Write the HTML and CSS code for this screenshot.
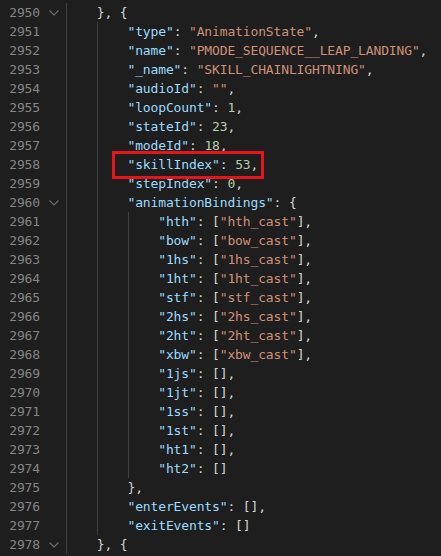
FILE: index.html
```html
<!DOCTYPE html>
<html>
<head>
<meta charset="utf-8">
<link rel="stylesheet" href="styles.css">
</head>
<body>
<div class="editor">
  <div class="row"><span class="num">2950</span><span class="fold"><svg width="10" height="6" viewBox="0 0 10 6"><polyline points="0.5,0.5 5,5 9.5,0.5" fill="none" stroke="#6f6f6f" stroke-width="1.1"/></svg></span><span class="code"><span class="ig">    </span>}, {</span></div>
  <div class="row"><span class="num">2951</span><span class="fold"></span><span class="code"><span class="ig">    </span><span class="ig">    </span><span class="k">"type"</span>: <span class="s">"AnimationState"</span>,</span></div>
  <div class="row"><span class="num">2952</span><span class="fold"></span><span class="code"><span class="ig">    </span><span class="ig">    </span><span class="k">"name"</span>: <span class="s">"PMODE_SEQUENCE__LEAP_LANDING"</span>,</span></div>
  <div class="row"><span class="num">2953</span><span class="fold"></span><span class="code"><span class="ig">    </span><span class="ig">    </span><span class="k">"_name"</span>: <span class="s">"SKILL_CHAINLIGHTNING"</span>,</span></div>
  <div class="row"><span class="num">2954</span><span class="fold"></span><span class="code"><span class="ig">    </span><span class="ig">    </span><span class="k">"audioId"</span>: <span class="s">""</span>,</span></div>
  <div class="row"><span class="num">2955</span><span class="fold"></span><span class="code"><span class="ig">    </span><span class="ig">    </span><span class="k">"loopCount"</span>: <span class="n">1</span>,</span></div>
  <div class="row"><span class="num">2956</span><span class="fold"></span><span class="code"><span class="ig">    </span><span class="ig">    </span><span class="k">"stateId"</span>: <span class="n">23</span>,</span></div>
  <div class="row"><span class="num">2957</span><span class="fold"></span><span class="code"><span class="ig">    </span><span class="ig">    </span><span class="k">"modeId"</span>: <span class="n">18</span>,</span></div>
  <div class="row"><span class="num">2958</span><span class="fold"></span><span class="code"><span class="ig">    </span><span class="ig">    </span><span class="mark"><span class="k">"skillIndex"</span>: <span class="n">53</span>,</span></span></div>
  <div class="row"><span class="num">2959</span><span class="fold"></span><span class="code"><span class="ig">    </span><span class="ig">    </span><span class="k">"stepIndex"</span>: <span class="n">0</span>,</span></div>
  <div class="row"><span class="num">2960</span><span class="fold"><svg width="10" height="6" viewBox="0 0 10 6"><polyline points="0.5,0.5 5,5 9.5,0.5" fill="none" stroke="#6f6f6f" stroke-width="1.1"/></svg></span><span class="code"><span class="ig">    </span><span class="ig">    </span><span class="k">"animationBindings"</span>: {</span></div>
  <div class="row"><span class="num">2961</span><span class="fold"></span><span class="code"><span class="ig">    </span><span class="ig">    </span><span class="ig">    </span><span class="k">"hth"</span>: [<span class="s">"hth_cast"</span>],</span></div>
  <div class="row"><span class="num">2962</span><span class="fold"></span><span class="code"><span class="ig">    </span><span class="ig">    </span><span class="ig">    </span><span class="k">"bow"</span>: [<span class="s">"bow_cast"</span>],</span></div>
  <div class="row"><span class="num">2963</span><span class="fold"></span><span class="code"><span class="ig">    </span><span class="ig">    </span><span class="ig">    </span><span class="k">"1hs"</span>: [<span class="s">"1hs_cast"</span>],</span></div>
  <div class="row"><span class="num">2964</span><span class="fold"></span><span class="code"><span class="ig">    </span><span class="ig">    </span><span class="ig">    </span><span class="k">"1ht"</span>: [<span class="s">"1ht_cast"</span>],</span></div>
  <div class="row"><span class="num">2965</span><span class="fold"></span><span class="code"><span class="ig">    </span><span class="ig">    </span><span class="ig">    </span><span class="k">"stf"</span>: [<span class="s">"stf_cast"</span>],</span></div>
  <div class="row"><span class="num">2966</span><span class="fold"></span><span class="code"><span class="ig">    </span><span class="ig">    </span><span class="ig">    </span><span class="k">"2hs"</span>: [<span class="s">"2hs_cast"</span>],</span></div>
  <div class="row"><span class="num">2967</span><span class="fold"></span><span class="code"><span class="ig">    </span><span class="ig">    </span><span class="ig">    </span><span class="k">"2ht"</span>: [<span class="s">"2ht_cast"</span>],</span></div>
  <div class="row"><span class="num">2968</span><span class="fold"></span><span class="code"><span class="ig">    </span><span class="ig">    </span><span class="ig">    </span><span class="k">"xbw"</span>: [<span class="s">"xbw_cast"</span>],</span></div>
  <div class="row"><span class="num">2969</span><span class="fold"></span><span class="code"><span class="ig">    </span><span class="ig">    </span><span class="ig">    </span><span class="k">"1js"</span>: [],</span></div>
  <div class="row"><span class="num">2970</span><span class="fold"></span><span class="code"><span class="ig">    </span><span class="ig">    </span><span class="ig">    </span><span class="k">"1jt"</span>: [],</span></div>
  <div class="row"><span class="num">2971</span><span class="fold"></span><span class="code"><span class="ig">    </span><span class="ig">    </span><span class="ig">    </span><span class="k">"1ss"</span>: [],</span></div>
  <div class="row"><span class="num">2972</span><span class="fold"></span><span class="code"><span class="ig">    </span><span class="ig">    </span><span class="ig">    </span><span class="k">"1st"</span>: [],</span></div>
  <div class="row"><span class="num">2973</span><span class="fold"></span><span class="code"><span class="ig">    </span><span class="ig">    </span><span class="ig">    </span><span class="k">"ht1"</span>: [],</span></div>
  <div class="row"><span class="num">2974</span><span class="fold"></span><span class="code"><span class="ig">    </span><span class="ig">    </span><span class="ig">    </span><span class="k">"ht2"</span>: []</span></div>
  <div class="row"><span class="num">2975</span><span class="fold"></span><span class="code"><span class="ig">    </span><span class="ig">    </span>},</span></div>
  <div class="row"><span class="num">2976</span><span class="fold"></span><span class="code"><span class="ig">    </span><span class="ig">    </span><span class="k">"enterEvents"</span>: [],</span></div>
  <div class="row"><span class="num">2977</span><span class="fold"></span><span class="code"><span class="ig">    </span><span class="ig">    </span><span class="k">"exitEvents"</span>: []</span></div>
  <div class="row"><span class="num">2978</span><span class="fold"><svg width="10" height="6" viewBox="0 0 10 6"><polyline points="0.5,0.5 5,5 9.5,0.5" fill="none" stroke="#6f6f6f" stroke-width="1.1"/></svg></span><span class="code"><span class="ig">    </span>}, {</span></div>
</div>
</body>
</html>
```

FILE: styles.css
```css
html, body {
  margin: 0;
  background: #1e1e1e;
  height: 100%;
  overflow: hidden;
}
.editor {
  padding-top: 3px;
  font-family: "DejaVu Sans Mono", "Liberation Mono", monospace;
  font-size: 13px;
  letter-spacing: -0.14px;
}
.row {
  display: flex;
  height: 19px;
  line-height: 19px;
}
.row:nth-child(10) {
  position: relative;
  z-index: 0;
}
.num {
  width: 40px;
  flex: none;
  text-align: right;
  color: #858585;
}
.fold {
  width: 26px;
  flex: none;
  display: flex;
  align-items: center;
  padding-left: 9px;
  box-sizing: border-box;
}
.code {
  white-space: pre;
  color: #d4d4d4;
}
.ig {
  display: inline-block;
  vertical-align: top;
  height: 19px;
  box-shadow: inset 1px 0 0 #404040;
}
.k { color: #9cdcfe; }
.s { color: #ce9178; }
.n { color: #b5cea8; }
.mark {
  position: relative;
  z-index: 1;
}
.mark::after {
  content: "";
  position: absolute;
  left: -16px;
  right: -6px;
  top: -6px;
  bottom: -7px;
  border: 3px solid #e8141c;
}
```
